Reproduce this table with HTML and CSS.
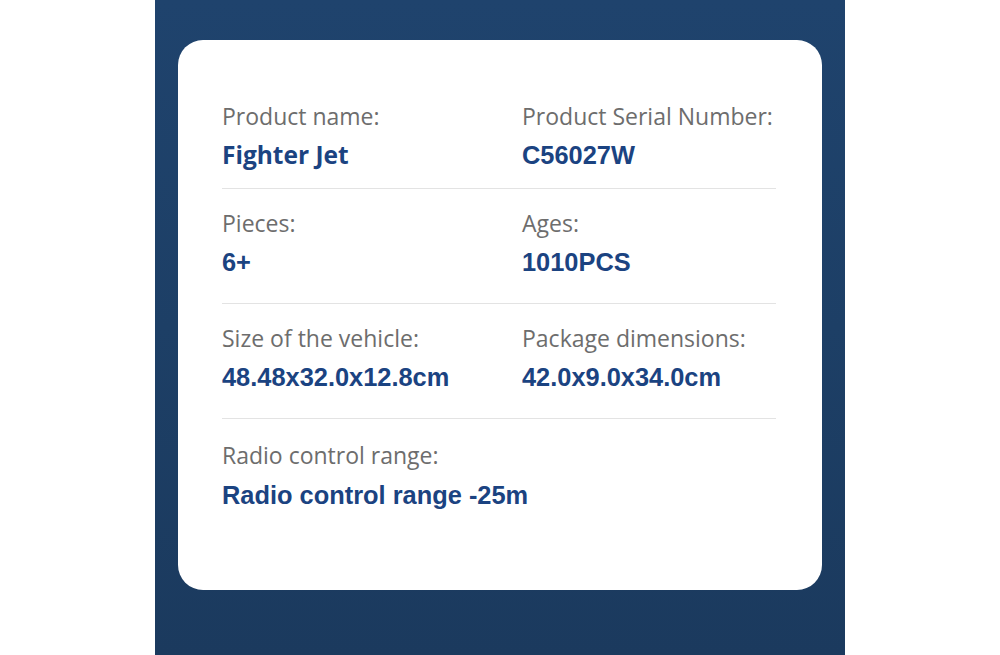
FILE: index.html
```html
<!DOCTYPE html>
<html lang="en">
<head>
<meta charset="utf-8">
<title>Fighter Jet specs</title>
<link rel="stylesheet" href="styles.css">
</head>
<body>
<main class="panel">
  <section class="card">
    <div class="row row-first">
      <div class="cell">
        <div class="label">Product name:</div>
        <div class="value value-sans">Fighter Jet</div>
      </div>
      <div class="cell">
        <div class="label">Product Serial Number:</div>
        <div class="value">C56027W</div>
      </div>
    </div>
    <div class="row">
      <div class="cell">
        <div class="label">Pieces:</div>
        <div class="value">6+</div>
      </div>
      <div class="cell">
        <div class="label">Ages:</div>
        <div class="value">1010PCS</div>
      </div>
    </div>
    <div class="row">
      <div class="cell">
        <div class="label">Size of the vehicle:</div>
        <div class="value">48.48x32.0x12.8cm</div>
      </div>
      <div class="cell">
        <div class="label">Package dimensions:</div>
        <div class="value">42.0x9.0x34.0cm</div>
      </div>
    </div>
    <div class="row row-last">
      <div class="cell">
        <div class="label">Radio control range:</div>
        <div class="value">Radio control range -25m</div>
      </div>
    </div>
  </section>
</main>
</body>
</html>
```
FILE: styles.css
```css
html, body {
  margin: 0;
  padding: 0;
  background: #ffffff;
}

body {
  font-family: "Open Sans", "Noto Sans", sans-serif;
}

.panel {
  width: 690px;
  height: 655px;
  margin: 0 auto;
  padding: 40px 23px 0;
  box-sizing: border-box;
  background: linear-gradient(180deg, #1f436d 0%, #1d3f66 50%, #1b3a5e 100%);
}

.card {
  height: 550px;
  box-sizing: border-box;
  background: #ffffff;
  border-radius: 25px;
  padding: 42px 46px 0 44px;
}

.row {
  display: grid;
  grid-template-columns: 300px 1fr;
  padding: 19px 0 26px;
  border-bottom: 1px solid #e3e3e3;
}

.row-first {
  padding-bottom: 18px;
}

.row-last {
  border-bottom: none;
  padding-top: 21px;
}

.cell {
  display: flex;
  flex-direction: column;
  gap: 9px;
}

.row-last .cell {
  gap: 10px;
}

.label {
  font-family: "Open Sans", "Noto Sans", sans-serif;
  font-size: 23px;
  line-height: 30px;
  color: #6d6d6d;
  white-space: nowrap;
}

.value {
  font-family: "Liberation Sans", Arial, sans-serif;
  font-weight: 700;
  font-size: 25.4px;
  line-height: 30px;
  color: #1b4381;
  white-space: nowrap;
}

.value-sans {
  font-family: "Open Sans", "Noto Sans", sans-serif;
  font-size: 24.5px;
}
```
